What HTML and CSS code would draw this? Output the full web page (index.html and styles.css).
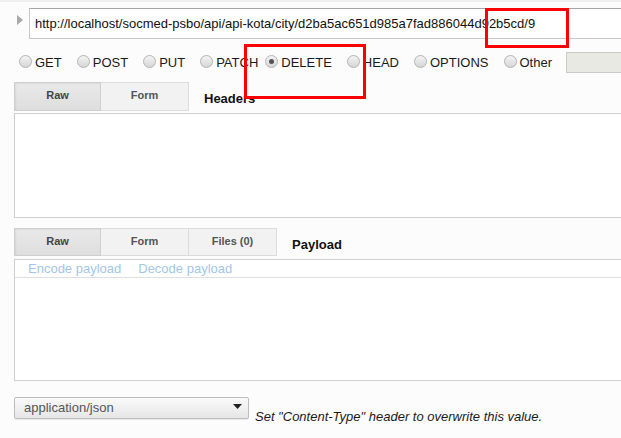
FILE: index.html
```html
<!DOCTYPE html>
<html>
<head>
<meta charset="utf-8">
<link rel="stylesheet" href="styles.css">
</head>
<body>
<div class="page">
  <div class="url-row">
    <svg class="toggle" width="6" height="10" viewBox="0 0 6 10"><path d="M0 0 L6 5 L0 10 Z" fill="#a8a8a8"/></svg>
    <div class="url">http://localhost/socmed-psbo/api/api-kota/city/d2ba5ac651d985a7fad886044d92b5cd/9</div>
  </div>

  <div class="methods">
    <label class="opt"><span class="radio"></span><span class="lbl">GET</span></label>
    <label class="opt"><span class="radio"></span><span class="lbl">POST</span></label>
    <label class="opt"><span class="radio"></span><span class="lbl">PUT</span></label>
    <label class="opt tight"><span class="radio"></span><span class="lbl">PATCH</span></label>
    <label class="opt"><span class="radio checked"></span><span class="lbl">DELETE</span></label>
    <label class="opt"><span class="radio"></span><span class="lbl">HEAD</span></label>
    <label class="opt"><span class="radio"></span><span class="lbl">OPTIONS</span></label>
    <label class="opt last"><span class="radio"></span><span class="lbl">Other</span></label>
    <div class="other-input"></div>
  </div>

  <div class="tabs tabs-headers">
    <div class="tab active">Raw</div>
    <div class="tab">Form</div>
    <div class="section-label">Headers</div>
  </div>
  <div class="headers-box"></div>

  <div class="tabs tabs-payload">
    <div class="tab active">Raw</div>
    <div class="tab">Form</div>
    <div class="tab">Files (0)</div>
    <div class="section-label">Payload</div>
  </div>
  <div class="payload-box">
    <div class="payload-links">
      <span class="plink">Encode payload</span>
      <span class="plink">Decode payload</span>
    </div>
  </div>

  <div class="ctype-row">
    <div class="select">
      <span class="select-text">application/json</span>
      <svg class="caret" width="9" height="5" viewBox="0 0 9 5"><path d="M0 0 H9 L4.5 5 Z" fill="#222"/></svg>
    </div>
    <span class="hint">Set "Content-Type" header to overwrite this value.</span>
  </div>

  <div class="mark mark-url"></div>
  <div class="mark mark-delete"></div>
</div>
</body>
</html>
```

FILE: styles.css
```css
html, body {
  margin: 0;
  padding: 0;
  background: #fcfcfc;
  overflow: hidden;
}
body {
  font-family: "Liberation Sans", Arial, sans-serif;
  font-size: 13px;
  color: #222;
  width: 621px;
  height: 438px;
}
.page {
  position: relative;
  width: 700px;
  height: 438px;
  border-top: 2px solid #efefef;
  box-sizing: border-box;
}
.url-row {
  display: flex;
  align-items: center;
  padding-left: 17px;
  margin-top: 6px;
}
.toggle {
  display: block;
  margin-right: 6px;
  margin-top: -8px;
}
.url {
  flex: 1;
  height: 31px;
  box-sizing: border-box;
  background: #fff;
  border: 1px solid #c8c8c8;
  border-top-color: #a6a6a6;
  padding-left: 5px;
  line-height: 29px;
  font-size: 13px;
  color: #111;
  white-space: nowrap;
}
.methods {
  display: flex;
  align-items: center;
  height: 21px;
  margin-top: 13px;
  padding-left: 19px;
}
.opt {
  display: flex;
  align-items: center;
  margin-right: 15px;
}
.opt.tight { margin-right: 7px; }
.opt.last { margin-right: 14px; }
.radio {
  width: 11px;
  height: 11px;
  border-radius: 50%;
  border: 1px solid #b4b4b4;
  background: linear-gradient(#f4f4f4, #d6d6d6);
  margin-right: 3px;
  margin-top: -3px;
  position: relative;
  box-sizing: content-box;
}
.radio.checked::after {
  content: "";
  position: absolute;
  left: 3px;
  top: 3px;
  width: 5px;
  height: 5px;
  border-radius: 50%;
  background: #555;
}
.lbl {
  color: #1a1a1a;
  line-height: 15px;
}
.other-input {
  width: 80px;
  height: 21px;
  box-sizing: border-box;
  background: #e9e9e4;
  border: 1px solid #cacaca;
}
.tabs {
  display: flex;
  align-items: stretch;
  padding-left: 14px;
}
.tabs-headers {
  margin-top: 9px;
  height: 29px;
}
.tabs-payload {
  margin-top: 10px;
  height: 28px;
}
.tab {
  width: 87px;
  box-sizing: border-box;
  border: 1px solid #dcdcdc;
  background: #f2f2f2;
  text-align: center;
  font-size: 11px;
  font-weight: bold;
  color: #555;
  line-height: 25px;
}
.tab + .tab { border-left: none; width: 88px; }
.tab.active {
  background: linear-gradient(#e9e9e9, #dedede);
  border-color: #cfcfcf;
  color: #444;
  box-shadow: inset 1px 1px 2px rgba(0,0,0,0.06);
}
.section-label {
  font-weight: bold;
  font-size: 13px;
  color: #111;
  margin-left: 15px;
  padding-top: 9px;
}
.headers-box {
  margin-top: 2px;
  margin-left: 14px;
  height: 105px;
  box-sizing: border-box;
  background: #fff;
  border: 1px solid #cfcfcf;
}
.payload-box {
  margin-top: 3px;
  margin-left: 14px;
  height: 122px;
  box-sizing: border-box;
  background: #fff;
  border: 1px solid #cfcfcf;
}
.payload-links {
  height: 17px;
  border-bottom: 1px solid #dedede;
  display: flex;
  gap: 17px;
  padding-left: 13px;
  line-height: 17px;
}
.plink {
  color: #a3c6e8;
}
.ctype-row {
  display: flex;
  align-items: flex-end;
  margin-top: 16px;
  padding-left: 14px;
}
.select {
  width: 235px;
  height: 22px;
  box-sizing: border-box;
  border: 1px solid #bdbdbd;
  border-radius: 2px;
  background: linear-gradient(#fafafa, #e6e6e6);
  box-shadow: 0 1px 1px rgba(0,0,0,0.08);
  display: flex;
  align-items: center;
  justify-content: space-between;
  padding: 0 6px 0 9px;
  color: #555;
}
.select-text { line-height: 18px; margin-top: -1px; }
.caret { display: block; margin-top: -3px; }
.hint {
  font-style: italic;
  color: #1a1a1a;
  margin-left: 6px;
  line-height: 15px;
  margin-bottom: -5px;
}
.mark {
  position: absolute;
  border: 3px solid #f00;
  box-sizing: border-box;
}
.mark-url {
  left: 485px;
  top: 6px;
  width: 84px;
  height: 40px;
}
.mark-delete {
  left: 244px;
  top: 42px;
  width: 122px;
  height: 55px;
}
```
